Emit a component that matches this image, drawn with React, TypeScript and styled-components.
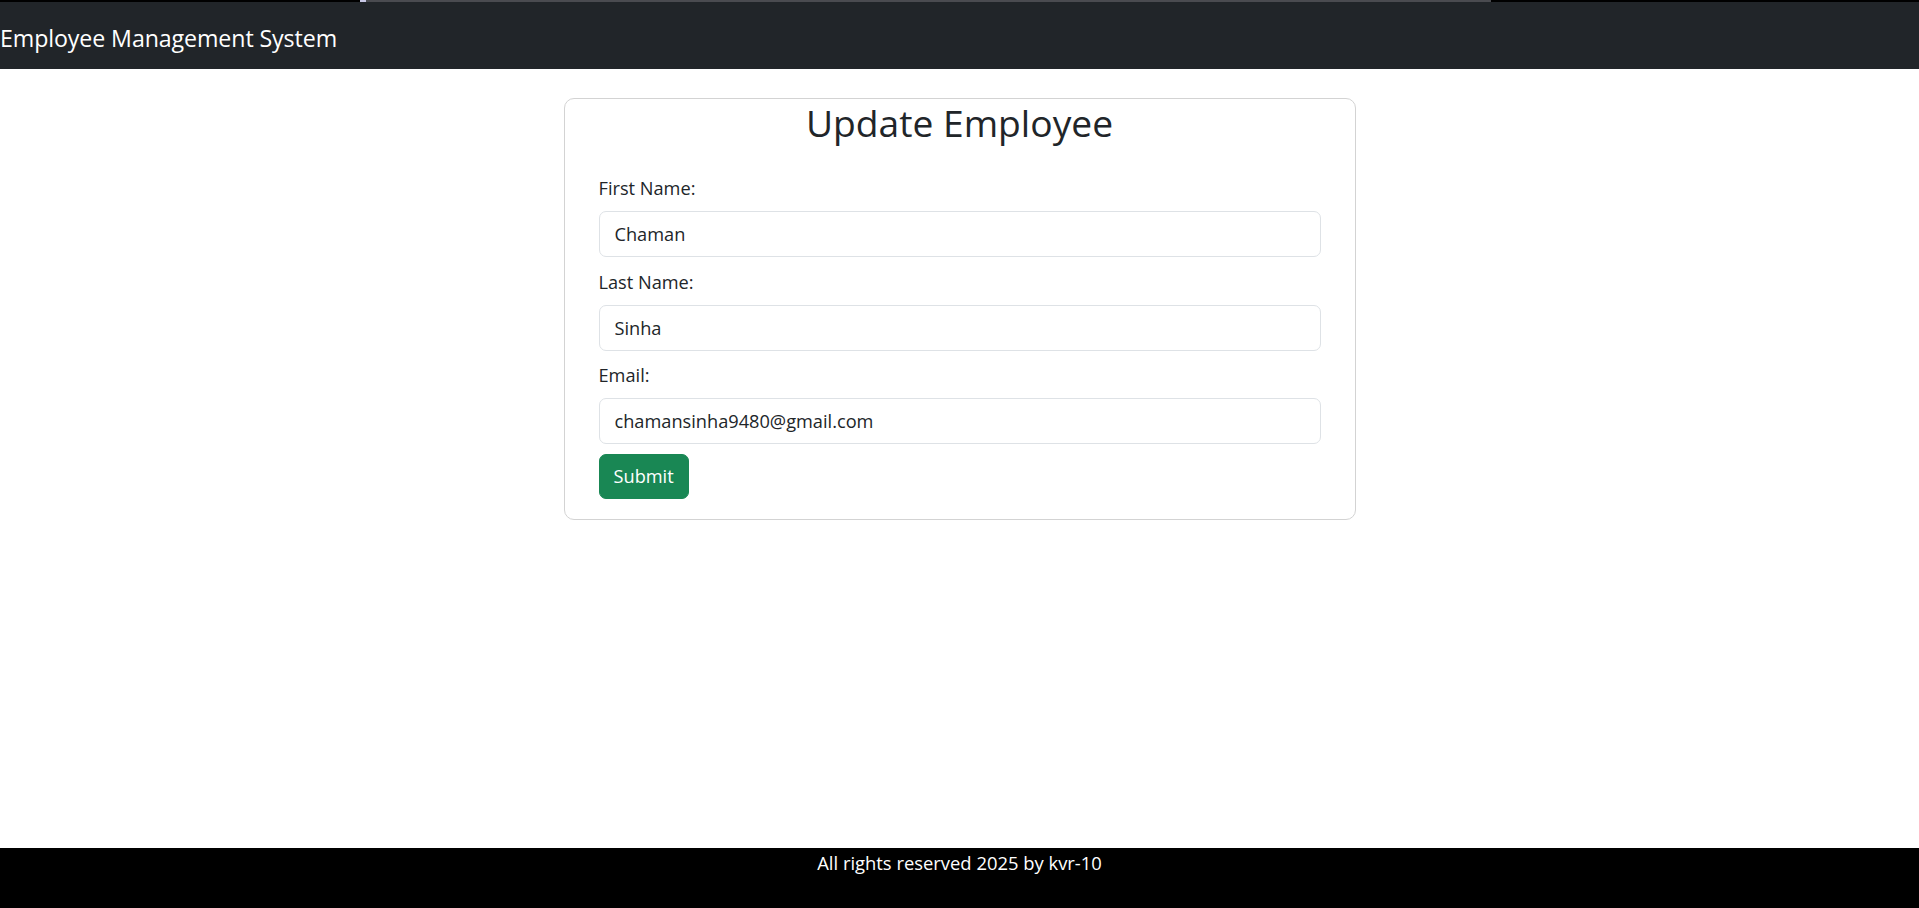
import React, { useState } from 'react'
import styled, { createGlobalStyle } from 'styled-components'

const GlobalStyle = createGlobalStyle`
  html, body {
    margin: 0;
    padding: 0;
    background: #fff;
  }
  body {
    font-family: 'Open Sans', 'Noto Sans', sans-serif;
    color: #212529;
  }
  * {
    box-sizing: border-box;
  }
`

const Page = styled.div`
  min-height: 100vh;
  display: flex;
  flex-direction: column;
`

const TopStrip = styled.div`
  display: flex;
  height: 2px;
  background: #000;
`

const StripGap = styled.div`
  width: 360px;
`

const StripTab = styled.div`
  width: 1131px;
  background: linear-gradient(to right, #c8c8e6 0, #c8c8e6 6px, #4a4b50 6px);
`

const Navbar = styled.nav`
  height: 67px;
  display: flex;
  align-items: center;
  padding-top: 4px;
  background: #212529;
`

const Brand = styled.span`
  color: #fff;
  font-size: 23.2px;
  line-height: 30px;
  letter-spacing: -0.1px;
`

const Main = styled.main`
  flex: 1;
  padding-top: 29px;
`

const Card = styled.div`
  width: 792px;
  margin: 0 auto;
  border: 1px solid #d3d3d3;
  border-radius: 10px;
  padding: 0 34px 20px;
`

const Title = styled.h2`
  margin: 0 0 26px;
  text-align: center;
  font-size: 37.2px;
  font-weight: 500;
  line-height: 48px;
  color: #212529;
`

const Field = styled.div`
  margin-bottom: 9.5px;
`

const Label = styled.label`
  display: block;
  font-size: 18.2px;
  line-height: 30px;
  margin-bottom: 8px;
  color: #212529;
`

const Input = styled.input`
  display: block;
  width: 100%;
  height: 46px;
  padding: 0 15px;
  font-family: inherit;
  font-size: 18.2px;
  color: #212529;
  background: #fff;
  border: 1px solid #dee2e6;
  border-radius: 7px;
  outline: none;
`

const SubmitButton = styled.button`
  height: 45px;
  padding: 0 14px;
  font-family: inherit;
  font-size: 18.2px;
  color: #fff;
  background: #198754;
  border: 1px solid #198754;
  border-radius: 7px;
  cursor: pointer;
`

const Footer = styled.footer`
  height: 60px;
  background: #000;
  color: #fff;
  text-align: center;
  font-size: 18.4px;
  line-height: 30px;
`

export default function App() {
  const [firstName, setFirstName] = useState('Chaman')
  const [lastName, setLastName] = useState('Sinha')
  const [email, setEmail] = useState('chamansinha9480@gmail.com')

  return (
    <Page>
      <GlobalStyle />
      <TopStrip>
        <StripGap />
        <StripTab />
      </TopStrip>
      <Navbar>
        <Brand>Employee Management System</Brand>
      </Navbar>
      <Main>
        <Card>
          <Title>Update Employee</Title>
          <form onSubmit={(e) => e.preventDefault()}>
            <Field>
              <Label>First Name:</Label>
              <Input
                value={firstName}
                onChange={(e) => setFirstName(e.target.value)}
              />
            </Field>
            <Field>
              <Label>Last Name:</Label>
              <Input
                value={lastName}
                onChange={(e) => setLastName(e.target.value)}
              />
            </Field>
            <Field>
              <Label>Email:</Label>
              <Input value={email} onChange={(e) => setEmail(e.target.value)} />
            </Field>
            <SubmitButton type="submit">Submit</SubmitButton>
          </form>
        </Card>
      </Main>
      <Footer>All rights reserved 2025 by kvr-10</Footer>
    </Page>
  )
}
